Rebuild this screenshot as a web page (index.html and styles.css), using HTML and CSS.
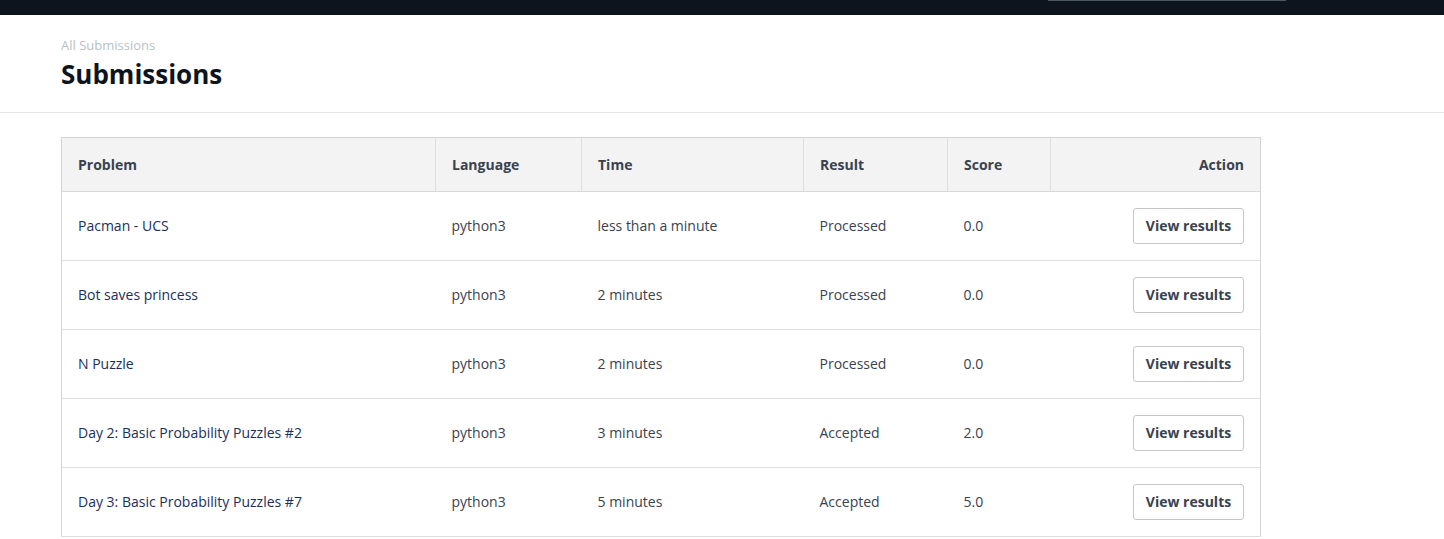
FILE: index.html
```html
<!DOCTYPE html>
<html>
<head>
<meta charset="utf-8">
<link rel="stylesheet" href="styles.css">
</head>
<body>
<div class="topbar"><div class="search-edge"></div></div>
<header class="page-header">
  <div class="crumb">All Submissions</div>
  <h1 class="title">Submissions</h1>
</header>
<main class="content">
  <table class="subs">
    <colgroup>
      <col class="c-prob"><col class="c-lang"><col class="c-time"><col class="c-res"><col class="c-score"><col class="c-act">
    </colgroup>
    <thead>
      <tr><th>Problem</th><th>Language</th><th>Time</th><th>Result</th><th>Score</th><th class="right">Action</th></tr>
    </thead>
    <tbody>
      <tr><td class="prob">Pacman - UCS</td><td>python3</td><td>less than a minute</td><td>Processed</td><td>0.0</td><td class="right"><button class="btn">View results</button></td></tr>
      <tr><td class="prob">Bot saves princess</td><td>python3</td><td>2 minutes</td><td>Processed</td><td>0.0</td><td class="right"><button class="btn">View results</button></td></tr>
      <tr><td class="prob">N Puzzle</td><td>python3</td><td>2 minutes</td><td>Processed</td><td>0.0</td><td class="right"><button class="btn">View results</button></td></tr>
      <tr><td class="prob">Day 2: Basic Probability Puzzles #2</td><td>python3</td><td>3 minutes</td><td>Accepted</td><td>2.0</td><td class="right"><button class="btn">View results</button></td></tr>
      <tr><td class="prob">Day 3: Basic Probability Puzzles #7</td><td>python3</td><td>5 minutes</td><td>Accepted</td><td>5.0</td><td class="right"><button class="btn">View results</button></td></tr>
    </tbody>
  </table>
</main>
</body>
</html>
```
FILE: styles.css
```css
* { box-sizing: border-box; }
html, body { margin: 0; padding: 0; background: #fff; }
body { font-family: "Open Sans", "Liberation Sans", sans-serif; color: #39424e; overflow: hidden; }

.topbar { height: 15px; background: #0e141e; display: flex; justify-content: flex-end; align-items: flex-start; }
.search-edge { width: 238px; height: 1px; background: #4b5863; margin-right: 158px; }

.page-header { padding: 22px 61px 0; height: 98px; border-bottom: 1px solid #e6e6e6; }
.crumb { font-size: 13px; line-height: 17px; color: #b8c1c6; }
.title { margin: 3px 0 0; font-size: 26px; line-height: 34px; font-weight: 700; color: #0e141e; }

.content { padding: 24px 61px 0; }
.subs { width: 1199px; border-collapse: collapse; border: 1px solid #d3d3d3; table-layout: fixed; font-size: 14px; }
.c-prob { width: 374px; } .c-lang { width: 146px; } .c-time { width: 222px; }
.c-res { width: 144px; } .c-score { width: 103px; } .c-act { width: 210px; }
.subs th { background: #f3f3f3; height: 54px; text-align: left; font-weight: 700; padding: 0 16px; border-left: 1px solid #dedede; border-bottom: 1px solid #d8d8d8; color: #39424e; }
.subs th:first-child { border-left: none; }
.subs td { height: 69px; padding: 0 16px 1px; border-bottom: 1px solid #dfdfdf; color: #39424e; white-space: nowrap; }
.subs .right { text-align: right; }
.subs td.prob { color: #1b2f5b; }
.btn { font-family: inherit; font-size: 14px; font-weight: 700; color: #39424e; background: #fff; border: 1px solid #c6c6c6; border-radius: 3px; height: 36px; width: 111px; padding: 0; cursor: pointer; }
```
